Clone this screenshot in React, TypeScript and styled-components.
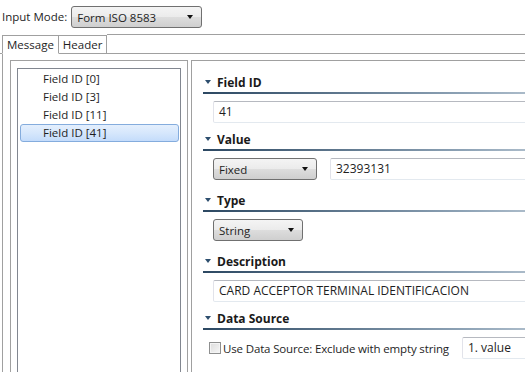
import React from "react";
import styled, { createGlobalStyle } from "styled-components";

const GlobalStyle = createGlobalStyle`
  html, body {
    margin: 0;
    padding: 0;
    background: #ffffff;
    overflow: hidden;
  }
  body {
    font-family: "Open Sans", "Noto Sans", sans-serif;
    font-size: 11.5px;
    color: #1e1e1e;
  }
`;

const Shell = styled.div`
  width: 640px;
  height: 372px;
  display: flex;
  flex-direction: column;
`;

const TopBar = styled.div`
  height: 34px;
  display: flex;
  align-items: center;
  padding-left: 2px;
  gap: 4px;
`;

const Label = styled.span`
  line-height: 16px;
`;

const Combo = styled.div<{ $width: number }>`
  box-sizing: border-box;
  width: ${(p) => p.$width}px;
  height: 22px;
  border: 1px solid #707070;
  border-radius: 3px;
  background: linear-gradient(
    to bottom,
    #f4f4f4 0%,
    #ebebeb 50%,
    #dddddd 51%,
    #cfcfcf 100%
  );
  display: flex;
  align-items: center;
  justify-content: space-between;
  padding: 0 8px 0 5px;
  flex-shrink: 0;
`;

const Arrow = styled.span`
  width: 0;
  height: 0;
  border-left: 3.5px solid transparent;
  border-right: 3.5px solid transparent;
  border-top: 4px solid #111;
`;

const TabStrip = styled.div`
  height: 20px;
  display: flex;
  box-sizing: border-box;
`;

const TabLead = styled.div`
  width: 2px;
  box-sizing: border-box;
  border-bottom: 1px solid #a0a0a0;
  margin-top: 19px;
`;

const Tab = styled.div<{ $active?: boolean }>`
  box-sizing: border-box;
  margin-top: 1px;
  height: 19px;
  line-height: 17px;
  padding: 0 4px;
  border: 1px solid #a0a0a0;
  border-left: ${(p) => (p.$active ? "1px solid #a0a0a0" : "none")};
  border-bottom: ${(p) => (p.$active ? "1px solid #ffffff" : "1px solid #a0a0a0")};
  background: #ffffff;
`;

const TabFiller = styled.div`
  flex: 1;
  box-sizing: border-box;
  border-top: 1px solid #a0a0a0;
  border-bottom: 1px solid #a0a0a0;
`;

const TabBody = styled.div`
  flex: 1;
  margin-left: 2px;
  border-left: 1px solid #a0a0a0;
  display: flex;
  gap: 3px;
  padding: 6px 0 0 7px;
  min-height: 0;
`;

const LeftPane = styled.div`
  box-sizing: border-box;
  width: 178px;
  border: 1px solid #a0a0a0;
  border-bottom: none;
  padding: 7px 6px 0 6px;
  display: flex;
`;

const List = styled.div`
  flex: 1;
  border: 1px solid #828790;
  border-bottom: none;
  padding-top: 1px;
`;

const Row = styled.div<{ $selected?: boolean }>`
  box-sizing: border-box;
  height: 18px;
  line-height: 16px;
  margin: 0 1px 0 2px;
  padding-left: 22px;
  border-radius: 3px;
  border: 1px solid ${(p) => (p.$selected ? "#84acdd" : "transparent")};
  background: ${(p) =>
    p.$selected
      ? "linear-gradient(to bottom, #e4effd 0%, #d6e7fc 50%, #c4dcfb 100%)"
      : "transparent"};
`;

const RightPane = styled.div`
  flex: 1;
  box-sizing: border-box;
  border: 1px solid #a0a0a0;
  border-bottom: none;
  padding: 13px 0 0 11px;
  display: flex;
  flex-direction: column;
`;

const SectionHead = styled.div`
  display: flex;
  flex-direction: column;
  padding-top: 8px;
  &:first-child {
    padding-top: 0;
  }
`;

const Title = styled.div`
  display: flex;
  align-items: center;
  gap: 6px;
  padding-left: 2px;
  height: 16px;
  margin-bottom: 2px;
  font-weight: 700;
  font-size: 12px;
  color: #1a1a1a;
`;

const Twisty = styled.span`
  width: 0;
  height: 0;
  border-left: 3.5px solid transparent;
  border-right: 3.5px solid transparent;
  border-top: 4px solid #2d4e6e;
`;

const Rule = styled.div`
  height: 2px;
  background: linear-gradient(to right, #2c4862 0%, #8ea3b6 60%, #dfe6ec 100%);
`;

const Content = styled.div<{ $indent?: number; $extra?: number }>`
  display: flex;
  align-items: center;
  margin-top: 7px;
  padding-left: ${(p) => p.$indent ?? 10}px;
  margin-bottom: ${(p) => p.$extra ?? 0}px;
  gap: 13px;
`;

const TextBox = styled.div<{ $width?: number }>`
  box-sizing: border-box;
  height: 22px;
  line-height: 20px;
  padding-left: 5px;
  font-size: 12px;
  border: 1px solid #abadb3;
  border-color: #b6b9c0 #dde1e7 #e3e9ef #e2e3ea;
  border-radius: 2px;
  background: #ffffff;
  white-space: nowrap;
  ${(p) => (p.$width ? `width: ${p.$width}px; flex-shrink: 0;` : "flex: 1;")}
`;

const CheckGroup = styled.label`
  display: flex;
  align-items: center;
  gap: 2px;
  white-space: nowrap;
  letter-spacing: -0.15px;
`;

const Check = styled.span`
  box-sizing: border-box;
  width: 12px;
  height: 12px;
  border: 1px solid #8e8f8f;
  background: linear-gradient(135deg, #dcdcdc 0%, #f6f6f6 100%);
  box-shadow: inset 0 0 0 1px #f4f4f4;
  flex-shrink: 0;
`;

function Section({ title, children }: { title: string; children?: React.ReactNode }) {
  return (
    <>
      <SectionHead>
        <Title>
          <Twisty />
          {title}
        </Title>
        <Rule />
      </SectionHead>
      {children}
    </>
  );
}

const fields = ["Field ID [0]", "Field ID [3]", "Field ID [11]", "Field ID [41]"];

export default function App() {
  return (
    <Shell>
      <GlobalStyle />
      <TopBar>
        <Label>Input Mode:</Label>
        <Combo $width={131}>
          <span>Form ISO 8583</span>
          <Arrow />
        </Combo>
      </TopBar>

      <TabStrip>
        <TabLead />
        <Tab $active>Message</Tab>
        <Tab>Header</Tab>
        <TabFiller />
      </TabStrip>

      <TabBody>
        <LeftPane>
          <List>
            {fields.map((f) => (
              <Row key={f} $selected={f === "Field ID [41]"}>
                {f}
              </Row>
            ))}
          </List>
        </LeftPane>

        <RightPane>
          <Section title="Field ID">
            <Content>
              <TextBox>41</TextBox>
            </Content>
          </Section>
          <Section title="Value">
            <Content $extra={4}>
              <Combo $width={104}>
                <span>Fixed</span>
                <Arrow />
              </Combo>
              <TextBox>32393131</TextBox>
            </Content>
          </Section>
          <Section title="Type">
            <Content $extra={4}>
              <Combo $width={90}>
                <span>String</span>
                <Arrow />
              </Combo>
            </Content>
          </Section>
          <Section title="Description">
            <Content>
              <TextBox>CARD ACCEPTOR TERMINAL IDENTIFICACION</TextBox>
            </Content>
          </Section>
          <Section title="Data Source">
            <Content $indent={6}>
              <CheckGroup>
                <Check />
                Use Data Source: Exclude with empty string
              </CheckGroup>
              <TextBox>1. value</TextBox>
            </Content>
          </Section>
        </RightPane>
      </TabBody>
    </Shell>
  );
}
